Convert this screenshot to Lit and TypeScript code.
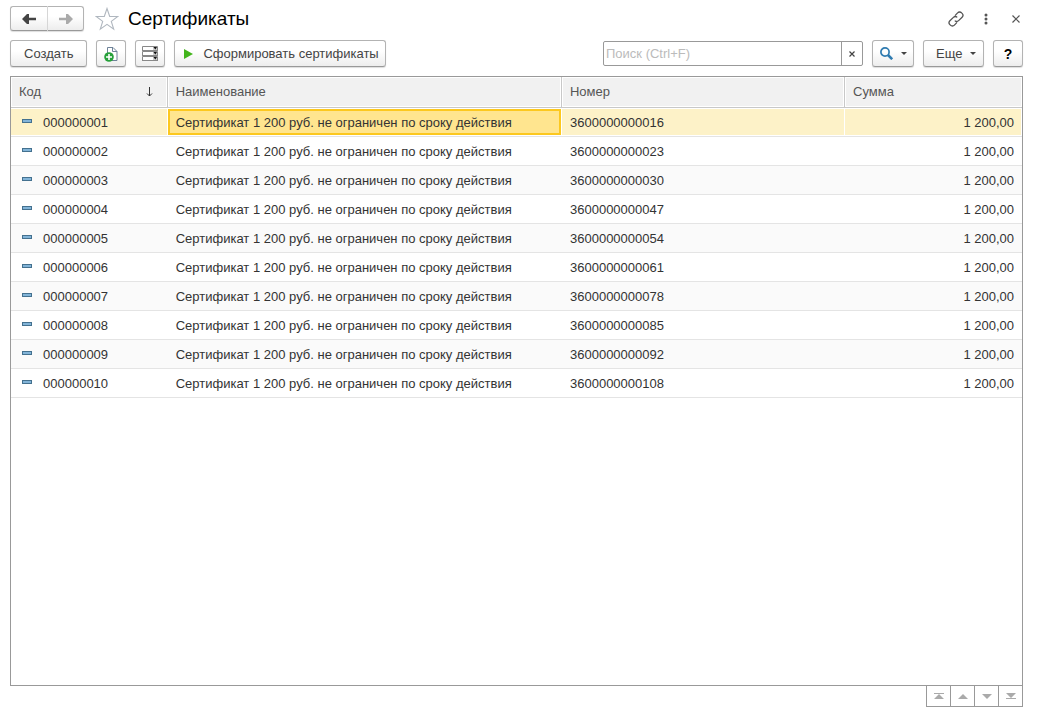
import { LitElement, html, css, svg } from "lit";
import { customElement, state } from "lit/decorators.js";
import { classMap } from "lit/directives/class-map.js";

interface Certificate {
  code: string;
  name: string;
  number: string;
  sum: string;
}

const NAME = "Сертификат 1 200 руб. не ограничен по сроку действия";

const ROWS: Certificate[] = [
  "3600000000016",
  "3600000000023",
  "3600000000030",
  "3600000000047",
  "3600000000054",
  "3600000000061",
  "3600000000078",
  "3600000000085",
  "3600000000092",
  "3600000000108",
].map((number, i) => ({
  code: String(i + 1).padStart(9, "0"),
  name: NAME,
  number,
  sum: "1 200,00",
}));

const SCROLLERS = [
  { label: "В начало", shape: svg`<path d="M0 0h10v1H0zM5 1l5 5H0z" />` },
  { label: "Вверх", shape: svg`<path d="M5 1l5 5H0z" />` },
  { label: "Вниз", shape: svg`<path d="M0 1h10L5 6z" />` },
  { label: "В конец", shape: svg`<path d="M0 0h10L5 5zM0 5h10v1H0z" />` },
];

const caret = html`<svg class="caret" width="6" height="3" viewBox="0 0 6 3" aria-hidden="true">
  <path d="M0 0h6L3 3z" fill="#444" />
</svg>`;

@customElement("app-root")
export class AppRoot extends LitElement {
  @state() private current = 0;

  static styles = css`
    :host {
      display: flex;
      flex-direction: column;
      box-sizing: border-box;
      min-height: 100vh;
      padding: 6px 15px 9px 10px;
      background: #fff;
      color: #333;
      font: 13px/16px "Liberation Sans", Arial, sans-serif;
    }
    * {
      box-sizing: border-box;
    }
    button,
    input {
      font: inherit;
      color: inherit;
      margin: 0;
    }
    svg {
      display: block;
      flex: none;
    }
    .titlebar {
      display: flex;
      align-items: center;
      height: 25px;
    }
    h1 {
      flex: 1;
      margin: 0 0 0 9px;
      font-size: 19px;
      line-height: 24px;
      font-weight: 400;
      color: #000;
    }
    .btn {
      display: flex;
      align-items: center;
      justify-content: center;
      height: 27px;
      padding: 0 13px;
      border: 1px solid #b3b3b3;
      border-bottom-color: #999;
      border-radius: 3px;
      background: linear-gradient(#fff 40%, #ededed);
      box-shadow: 0 1px 1px #ddd;
      color: #444;
      white-space: nowrap;
    }
    .square {
      width: 30px;
      padding: 0;
    }
    .nav {
      display: flex;
    }
    .nav .btn {
      width: 36px;
      height: 25px;
      padding: 0;
    }
    .nav .btn:first-child {
      width: 38px;
      border-radius: 3px 0 0 3px;
      border-right-color: #d5d5d5;
    }
    .nav .btn:last-child {
      border-left: 0;
      border-radius: 0 3px 3px 0;
    }
    .plain {
      display: flex;
      align-items: center;
      justify-content: center;
      padding: 0;
      border: 0;
      background: none;
    }
    .star {
      width: 24px;
      height: 24px;
      margin-left: 11px;
    }
    .corner .plain {
      width: 30px;
      height: 24px;
    }
    .corner {
      display: flex;
      margin-right: -8px;
    }
    .toolbar {
      display: flex;
      align-items: center;
      gap: 9px;
      margin-top: 9px;
    }
    .run {
      gap: 10px;
      padding: 0 6px 0 9px;
    }
    .search {
      display: flex;
      width: 260px;
      height: 25px;
      margin-left: auto;
      border: 1px solid #999;
      border-radius: 2px;
    }
    .search input {
      flex: 1;
      min-width: 0;
      padding: 0 2px;
      border: 0;
      outline: 0;
      background: none;
    }
    .search input::placeholder {
      color: #bbb;
      opacity: 1;
    }
    .search .plain {
      width: 21px;
      border-left: 1px solid #999;
    }
    .find {
      width: 42px;
      padding: 0;
      gap: 8px;
    }
    .more {
      width: 61px;
      gap: 7px;
      padding: 0 7px 0 12px;
      justify-content: space-between;
    }
    .help {
      color: #000;
      font-size: 14px;
      font-weight: 700;
    }
    .list {
      flex: 1;
      margin-top: 9px;
      border: 1px solid #999;
    }
    table {
      width: 100%;
      table-layout: fixed;
      border-collapse: separate;
      border-spacing: 0;
    }
    .c-code {
      width: 15.5%;
    }
    .c-name {
      width: 39%;
    }
    .c-number {
      width: 28%;
    }
    th {
      height: 31px;
      padding: 0 8px;
      border-right: 1px solid #c8c8c8;
      border-bottom: 1px solid #c8c8c8;
      background: #f1f1f1;
      box-shadow: inset 0 0 0 1px #fff;
      color: #555;
      font-weight: 400;
      text-align: left;
    }
    th:last-child {
      border-right: 0;
    }
    .sorted {
      display: flex;
      align-items: center;
      justify-content: space-between;
      padding-right: 6px;
    }
    td {
      height: 29px;
      padding: 2px 8px 0;
      border-bottom: 1px solid #e4e4e4;
      white-space: nowrap;
      overflow: hidden;
    }
    tbody tr:nth-child(odd) td {
      background: #fafafa;
    }
    tbody tr.current td {
      background: #fdf2c8;
      box-shadow: inset -1px 0 #fff, inset 0 1px #fff, inset 0 -1px #fff;
    }
    tbody tr.current td.focus {
      padding: 1px 1px 1px 0;
      box-shadow: none;
      background: #fff;
    }
    .frame {
      padding: 4px 6px 2px;
      border: 2px solid #fcc81f;
      background: #ffe58f;
    }
    .code {
      display: flex;
      align-items: center;
      gap: 11px;
      padding-left: 3px;
    }
    .dash {
      width: 10px;
      height: 4px;
      margin-bottom: 4px;
      border: 1px solid #44718f;
      background: #82b4d8;
    }
    .sum {
      text-align: right;
    }
    .scrollers {
      display: flex;
      align-self: flex-end;
      margin-top: -1px;
      border: 1px solid #999;
    }
    .scrollers .plain {
      width: 24px;
      height: 20px;
      border-right: 1px solid #999;
    }
    .scrollers .plain:last-child {
      width: 23px;
      border-right: 0;
    }
  `;

  render() {
    return html`
      <header class="titlebar">
        <nav class="nav">
          <button class="btn" aria-label="Назад">
            <svg width="14" height="10" viewBox="0 0 14 10" fill="#444">
              <path d="M0 5L5 0h2v3.700h7v2.600H7V10H5z" />
            </svg>
          </button>
          <button class="btn" aria-label="Вперед">
            <svg width="14" height="10" viewBox="0 0 14 10" fill="#aaa">
              <path d="M14 5L9 0H7v3.700H0v2.600h7V10h2z" />
            </svg>
          </button>
        </nav>
        <button class="plain star" aria-label="В избранное">
          <svg width="24" height="24" viewBox="0 0 24 24" fill="#fff" stroke="#b0b7bf" stroke-width="1.1">
            <path d="M12 1.500l2.700 8h8.100l-6.500 4.900 2.400 7.800-6.700-4.800-6.700 4.800 2.400-7.800L1.200 9.500h8.100z" />
          </svg>
        </button>
        <h1>Сертификаты</h1>
        <div class="corner">
          <button class="plain" aria-label="Получить ссылку">
            <svg width="16" height="16" viewBox="0 0 16 16" fill="none" stroke="#555" stroke-width="1.3">
              <path d="M7 4.600l2.600-2.700a2.700 2.700 0 0 1 4 0l.5.5a2.700 2.700 0 0 1 0 3.800L10.600 9.600a2.700 2.700 0 0 1-3.800 0" />
              <path d="M9 11.400l-2.600 2.700a2.700 2.700 0 0 1-4 0l-.5-.5a2.700 2.700 0 0 1 0-3.800L5.400 6.400a2.700 2.700 0 0 1 3.800 0" />
            </svg>
          </button>
          <button class="plain" aria-label="Меню">
            <svg width="4" height="12" viewBox="0 0 4 12" fill="#555">
              <circle cx="2" cy="2" r="1.5" /><circle cx="2" cy="6" r="1.5" /><circle cx="2" cy="10" r="1.5" />
            </svg>
          </button>
          <button class="plain" aria-label="Закрыть">
            <svg width="8" height="8" viewBox="0 0 8 8" stroke="#555" stroke-width="1.2">
              <path d="M.5.5l7 7M7.5.5l-7 7" />
            </svg>
          </button>
        </div>
      </header>

      <div class="toolbar">
        <button class="btn">Создать</button>
        <button class="btn square" aria-label="Создать копированием">
          <svg width="14" height="16" viewBox="0 0 14 16">
            <path d="M3.500 1.500h5.500l4 4v9h-9.500z" fill="#fff" stroke="#6f8399" />
            <path d="M8.500 1.500v4h4.500" fill="none" stroke="#6f8399" />
            <circle cx="5" cy="11" r="4.800" fill="#26a03a" />
            <path d="M5 8v6M2 11h6" stroke="#fff" stroke-width="1.600" />
          </svg>
        </button>
        <button class="btn square" aria-label="Настройка списка">
          <svg width="16" height="16" viewBox="0 0 16 16">
            <path d="M.5.5h15v4H.5zM.5 5.500h15v4H.5zM.5 10.500h15v4H.5z" fill="#fff" stroke="#888" />
            <path d="M0 4.500h16M0 9.500h16M0 14.500h16" stroke="#888" />
            <path d="M11 1h4v3h-4zM11 6h4v3h-4zM11 11h4v3h-4z" fill="#ccc" />
            <path d="M11.500 1h3.500l-1.700 2.500zM11.500 6h3.500l-1.700 2.500zM11.500 11h3.500l-1.700 2.500z" fill="#111" />
          </svg>
        </button>
        <button class="btn run">
          <svg width="9" height="10" viewBox="0 0 9 10"><path d="M0 0l9 5-9 5z" fill="#43b51c" /></svg>
          Сформировать сертификаты
        </button>
        <div class="search">
          <input type="text" aria-label="Поиск" placeholder="Поиск (Ctrl+F)" />
          <button class="plain" aria-label="Очистить">
            <svg width="6" height="6" viewBox="0 0 6 6" stroke="#444" stroke-width="1.2">
              <path d="M.5.5l5 5M5.500.5l-5 5" />
            </svg>
          </button>
        </div>
        <button class="btn find" aria-label="Найти">
          <svg width="13" height="13" viewBox="0 0 13 13" fill="none" stroke="#2f7bb0">
            <circle cx="5" cy="5" r="4.100" stroke-width="1.700" />
            <path d="M8 8l4.200 4.200" stroke-width="2.600" />
          </svg>
          ${caret}
        </button>
        <button class="btn more">Еще ${caret}</button>
        <button class="btn square help" aria-label="Справка">?</button>
      </div>

      <main class="list">
        <table>
          <colgroup>
            <col class="c-code" />
            <col class="c-name" />
            <col class="c-number" />
            <col />
          </colgroup>
          <thead>
            <tr>
              <th scope="col">
                <div class="sorted">
                  Код
                  <svg width="7" height="10" viewBox="0 0 7 10" fill="none" stroke="#333">
                    <path d="M3.500 0v9M1 6.500L3.500 9 6 6.500" />
                  </svg>
                </div>
              </th>
              <th scope="col">Наименование</th>
              <th scope="col">Номер</th>
              <th scope="col">Сумма</th>
            </tr>
          </thead>
          <tbody>
            ${ROWS.map((row, i) => {
              const current = i === this.current;
              return html`<tr class=${classMap({ current })} @click=${() => (this.current = i)}>
                <td><div class="code"><span class="dash"></span>${row.code}</div></td>
                <td class=${classMap({ focus: current })}>
                  ${current ? html`<div class="frame">${row.name}</div>` : row.name}
                </td>
                <td>${row.number}</td>
                <td class="sum">${row.sum}</td>
              </tr>`;
            })}
          </tbody>
        </table>
      </main>
      <div class="scrollers">
        ${SCROLLERS.map(
          (s) => html`<button class="plain" aria-label=${s.label}>
            <svg width="10" height="6" viewBox="0 0 10 6" fill="#aaa">${s.shape}</svg>
          </button>`
        )}
      </div>
    `;
  }
}
